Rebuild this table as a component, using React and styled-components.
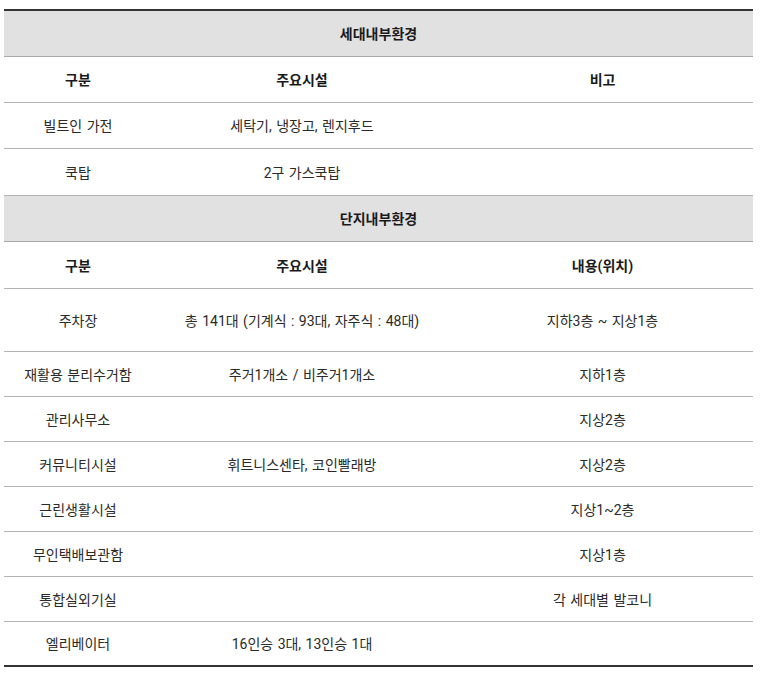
import React from "react";
import styled, { createGlobalStyle } from "styled-components";

const Global = createGlobalStyle`
  html, body { margin: 0; padding: 0; background: #fff; }
  body { font-family: "Roboto", "Noto Sans CJK KR", "Noto Sans", sans-serif; color: #222; }
`;

const Page = styled.div`
  padding: 9px 0 0 4px;
`;

const Table = styled.table`
  width: 749px;
  border-collapse: collapse;
  table-layout: fixed;
  border-top: 2px solid #333;
  border-bottom: 2px solid #333;
  font-size: 14px;
  letter-spacing: 0;
  word-spacing: 1px;
`;

const Row = styled.tr`
  height: ${(p) => p.$h || 45}px;
  background: ${(p) => (p.$section ? "#e1e1e1" : "#fff")};
  border-bottom: 1px solid ${(p) => (p.$section ? "#a9a9a9" : "#b4b4b4")};
`;

const Cell = styled.td`
  padding: 0 4px;
  text-align: center;
  vertical-align: middle;
  font-weight: ${(p) => (p.$bold ? 700 : 400)};
  color: ${(p) => (p.$bold ? "#1a1a1a" : "#2a2a2a")};
`;

const SectionCell = styled.td`
  text-align: center;
  vertical-align: middle;
  font-weight: 700;
  color: #1a1a1a;
`;

const Section = ({ title, h }) => (
  <Row $section $h={h}>
    <SectionCell colSpan={3}>{title}</SectionCell>
  </Row>
);

const Head = ({ cols, h }) => (
  <Row $h={h}>
    {cols.map((c, i) => (
      <Cell key={i} $bold>
        {c}
      </Cell>
    ))}
  </Row>
);

const Data = ({ cols, h }) => (
  <Row $h={h}>
    {cols.map((c, i) => (
      <Cell key={i}>{c}</Cell>
    ))}
  </Row>
);

const complex = [
  ["재활용 분리수거함", "주거1개소 / 비주거1개소", "지하1층"],
  ["관리사무소", "", "지상2층"],
  ["커뮤니티시설", "휘트니스센타, 코인빨래방", "지상2층"],
  ["근린생활시설", "", "지상1~2층"],
  ["무인택배보관함", "", "지상1층"],
  ["통합실외기실", "", "각 세대별 발코니"],
  ["엘리베이터", "16인승 3대, 13인승 1대", ""],
];

export default function App() {
  return (
    <Page>
      <Global />
      <Table>
        <colgroup>
          <col style={{ width: 148 }} />
          <col style={{ width: 300 }} />
          <col style={{ width: 301 }} />
        </colgroup>
        <tbody>
          <Section title="세대내부환경" h={46} />
          <Head cols={["구분", "주요시설", "비고"]} h={46} />
          <Data cols={["빌트인 가전", "세탁기, 냉장고, 렌지후드", ""]} h={46} />
          <Data cols={["쿡탑", "2구 가스쿡탑", ""]} h={47} />
          <Section title="단지내부환경" h={46} />
          <Head cols={["구분", "주요시설", "내용(위치)"]} h={47} />
          <Data
            cols={["주차장", "총 141대 (기계식 : 93대, 자주식 : 48대)", "지하3층 ~ 지상1층"]}
            h={63}
          />
          {complex.map((r, i) => (
            <Data key={i} cols={r} h={45} />
          ))}
        </tbody>
      </Table>
    </Page>
  );
}
